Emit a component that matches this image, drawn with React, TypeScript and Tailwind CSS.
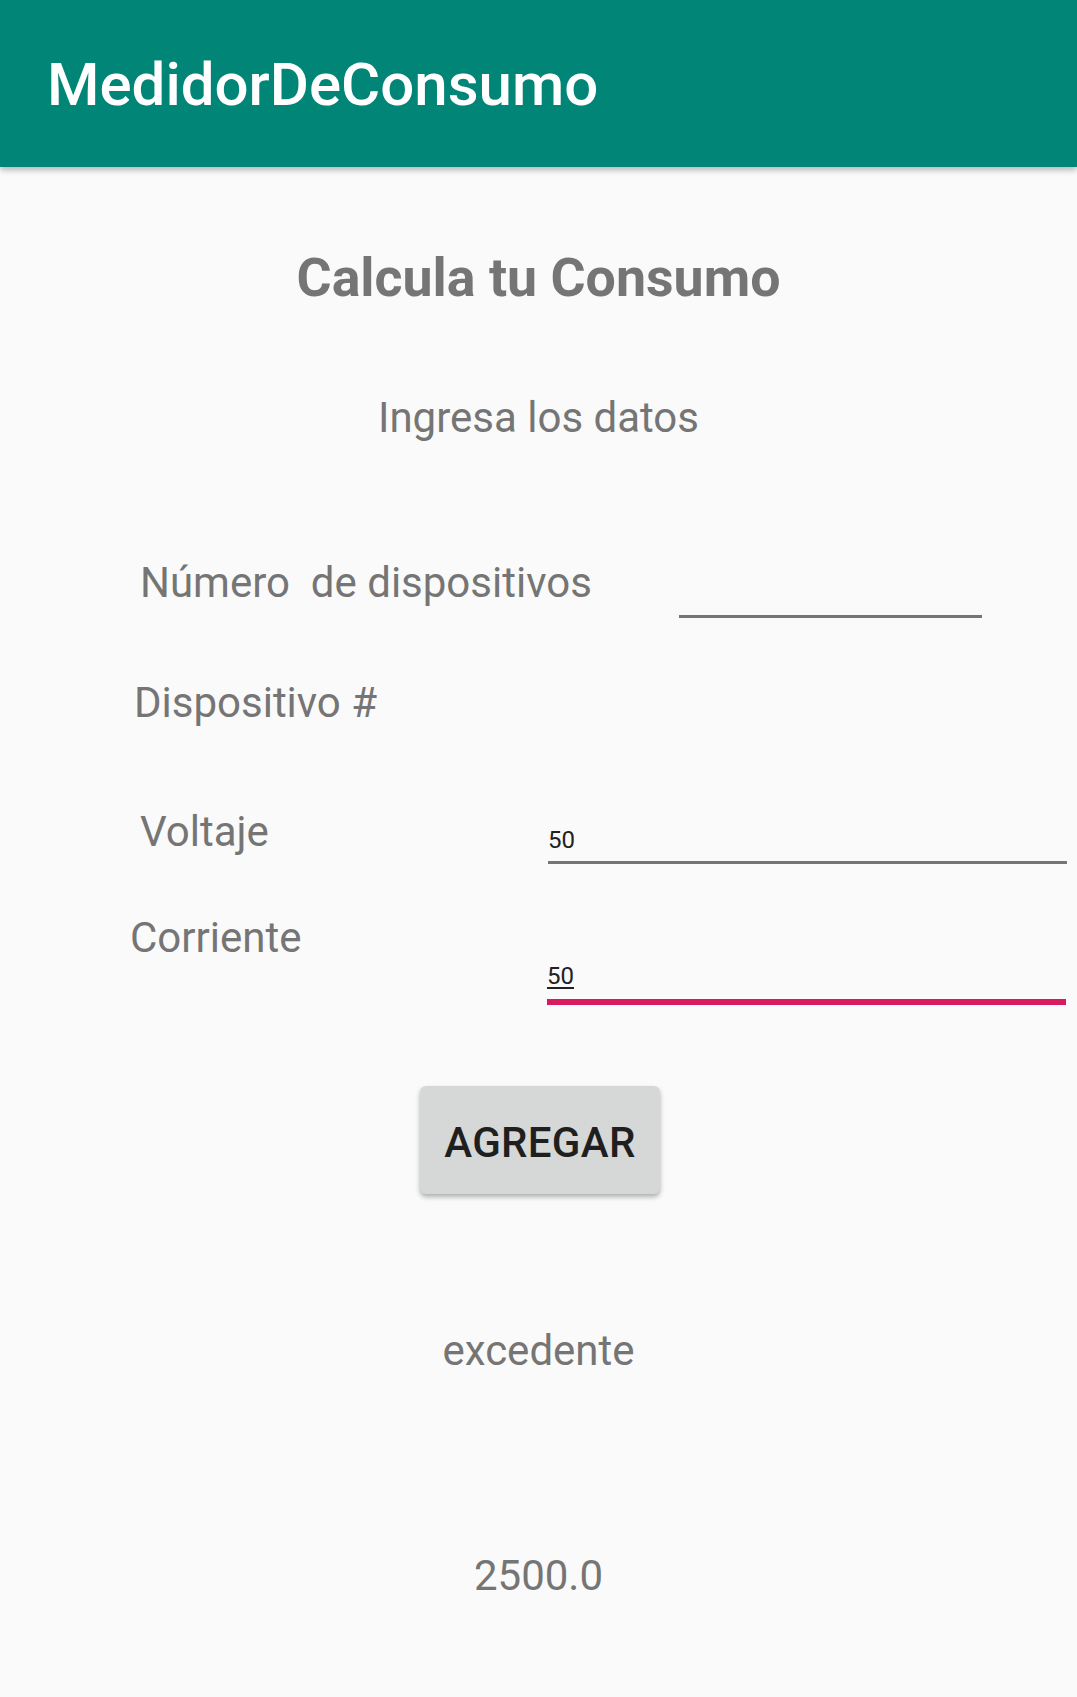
const GRAY = "text-[#757575]";

function Field({ value, active }: { value: string; active?: boolean }) {
  return (
    <div
      className={
        active
          ? "w-[519px] pt-[47px] pb-[11px] border-b-[6px] border-[#d81b60]"
          : "w-[519px] pt-[17px] pb-[9px] border-b-[3px] border-[#757575]"
      }
    >
      <div className="text-[24px] leading-none text-[#212121]">
        <span className={active ? "underline underline-offset-[3px]" : ""}>{value}</span>
      </div>
    </div>
  );
}

export default function App() {
  return (
    <div className="min-h-screen bg-[#fafafa] font-['Roboto',sans-serif]">
      {/* Toolbar */}
      <header className="relative z-10 h-[167px] bg-[#008577] pl-[47px] pt-[55px] shadow-[0_3px_6px_rgba(0,0,0,0.28)]">
        <h1 className="text-[60px] leading-none font-medium text-white">MedidorDeConsumo</h1>
      </header>

      <main className="flex flex-col">
        <h2 className={`mt-[84px] text-center text-[53.7px] leading-none font-bold ${GRAY}`}>Calcula tu Consumo</h2>
        <p className={`mt-[92px] text-center text-[42px] leading-none ${GRAY}`}>Ingresa los datos</p>

        <div className="mt-[123px] flex items-start">
          <span className={`ml-[140px] whitespace-pre text-[42px] leading-none ${GRAY}`}>Número  de dispositivos</span>
          <div className="ml-auto mr-[95px] h-[56px] w-[303px] border-b-[3px] border-[#757575]" />
        </div>

        <p className={`mt-[64px] ml-[134px] text-[42px] leading-none ${GRAY}`}>Dispositivo #</p>

        <div className="mt-[87px] flex items-start">
          <span className={`ml-[140px] w-[408px] text-[42px] leading-none ${GRAY}`}>Voltaje</span>
          <Field value="50" />
        </div>

        <div className="mt-[53px] flex items-start">
          <span className={`ml-[130px] w-[417px] text-[42px] leading-none ${GRAY}`}>Corriente</span>
          <Field value="50" active />
        </div>

        <div className="mt-[81px] flex justify-center pl-[3px]">
          <button className="h-[108px] w-[240px] rounded-[6px] bg-[#d6d7d7] pt-[6px] text-[42px] leading-none font-medium tracking-[0.3px] text-[#1f1f1f] shadow-[0_3px_5px_rgba(0,0,0,0.3)]">
            AGREGAR
          </button>
        </div>

        <p className={`mt-[136px] text-center text-[42px] leading-none ${GRAY}`}>excedente</p>
        <p className={`mt-[183px] text-center text-[42px] leading-none ${GRAY}`}>2500.0</p>
      </main>
    </div>
  );
}
